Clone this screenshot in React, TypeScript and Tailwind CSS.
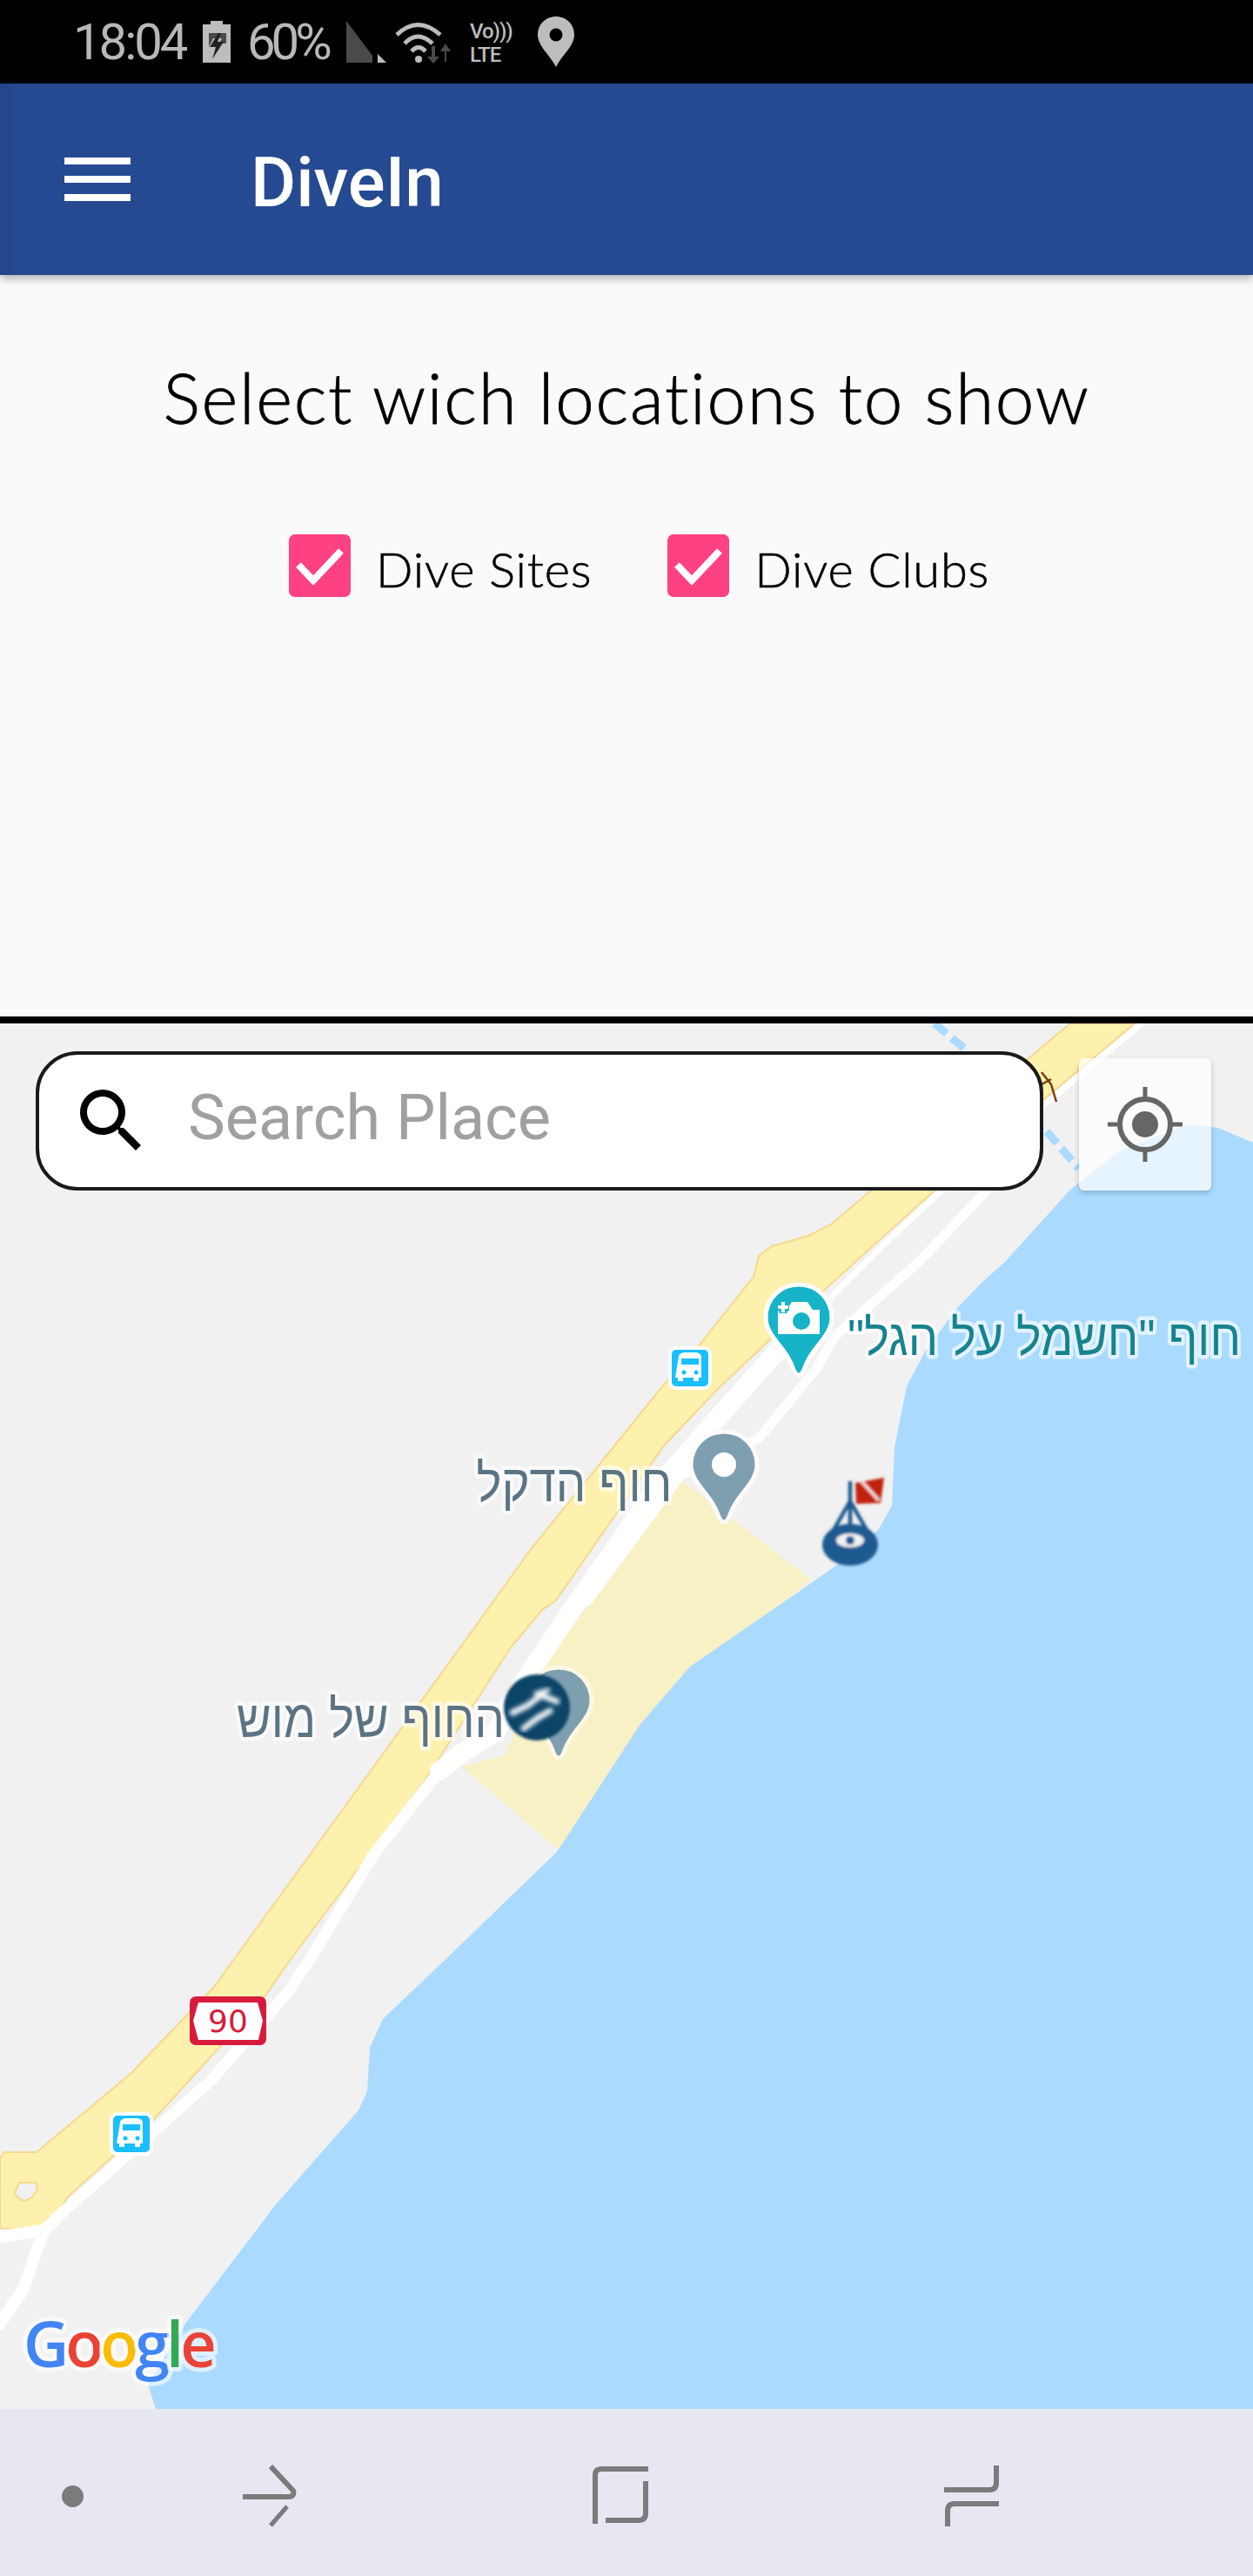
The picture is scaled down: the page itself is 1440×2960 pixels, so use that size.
import React from 'react';

const PIN = 'M0 0C-22 0-38 17-38 38C-38 60-14 72-6 98Q0 110 6 98C14 72 38 60 38 38C38 17 22 0 0 0Z';

const BusIcon: React.FC<{ x: number; y: number }> = ({ x, y }) => (
  <g transform={`translate(${x} ${y})`}>
    <rect x="2" y="2" width="46" height="46" rx="7" fill="#19bfff" stroke="#fff" strokeWidth="4" />
    <path d="M12 12q0-4 6-5h14q6 1 6 5v24h-3v4h-6v-4h-12v4h-6v-4h-3z" fill="#fff" />
    <rect x="15" y="14" width="20" height="7" fill="#19bfff" />
    <circle cx="18" cy="30" r="2.5" fill="#19bfff" />
    <circle cx="32" cy="30" r="2.5" fill="#19bfff" />
  </g>
);

// the map picture, in page coordinates
const MapDrawing: React.FC = () => (
  <svg viewBox="0 1176 1440 1592" className="absolute inset-0 w-full h-full">
    <defs>
      <filter id="soft"><feGaussianBlur stdDeviation="1.6" /></filter>
      <filter id="softer"><feGaussianBlur stdDeviation="2.6" /></filter>
    </defs>
    <rect x="0" y="1176" width="1440" height="1592" fill="#f1f1f1" />
    <path d="M782 1700L848 1750L932 1815L902 1840L793 1915L736 1981L642 2125L530 2030L580 2017L628 1907L680 1840Z" fill="#f8f1c6" />
    <path
      d="M1368 1292L1400 1296L1440 1313V2768H179L170 2740L213 2670L317 2533L412 2425L422 2403L425 2353L440 2320L500 2263L640 2128L736 1981L793 1915L902 1840L974 1790L1010 1757L1025 1730L1028 1663L1042 1593L1063 1553L1100 1503L1129 1473L1155 1450L1230 1367L1290 1320Z"
      fill="#aadaff"
    />
    <path d="M1074 1176L1111 1207M1203 1300L1240 1343" stroke="#aadaff" strokeWidth="9" strokeDasharray="18 8" fill="none" />
    {/* yellow main road band */}
    <path
      d="M1230 1176L1001 1368L955 1407L929 1420L887 1432L872 1443L866 1467L806 1543L758 1597L608 1783L560 1850L357 2130L270 2250L247 2282L150 2383L42 2473H5L0 2480V2560L30 2563L62 2553L77 2525L177 2435L300 2300L335 2250L427 2127L490 2043L587 1893L623 1850L638 1840L710 1737L764 1660L824 1597L884 1540L1016 1420L1074 1368L1304 1176Z"
      fill="#fef1ae"
      stroke="#f5d98f"
      strokeWidth="2"
    />
    <path d="M22 2508H42L43 2515L37 2525L28 2529L22 2527L17 2520Z" fill="#f1f1f1" stroke="#f5d98f" strokeWidth="2" />
    {/* roads */}
    <g fill="none" stroke="#fff" strokeLinejoin="round" strokeLinecap="round">
      <path d="M1312 1176L1082 1368L1022 1424L900 1545" strokeWidth="7" />
      <path d="M1134 1368L1056 1450L958 1537L938 1573L872 1653L782 1695L675 1840" strokeWidth="11" />
      <path d="M900 1545L815 1640L755 1710L657 1850" strokeWidth="22" />
      <path d="M657 1850L610 1920L585 1960L570 1990L530 2015L505 2035" strokeWidth="22" />
      <path d="M505 2035L430 2130L357 2250L330 2290L243 2390L63 2550" strokeWidth="13" />
      <path d="M63 2552L50 2563L0 2570M50 2563L43 2583L27 2630L0 2670" strokeWidth="14" />
    </g>
    <path d="M1197 1232L1208 1246L1214 1266M1197 1246L1208 1240" stroke="#7a3f0c" strokeWidth="2.5" fill="none" />

    {/* pins */}
    <g transform="translate(918 1476)">
      <path d={PIN} fill="#17b3c8" stroke="#fff" strokeWidth="5" />
      <path d="M-24 29H-14L-8 20H10L16 29H24V57H-24Z" fill="#fff" />
      <circle cx="3" cy="42" r="10" fill="#17b3c8" />
      <path d="M-18 33V19M-25 26H-11" stroke="#17b3c8" strokeWidth="9" />
      <path d="M-18 32V20M-24 26H-12" stroke="#fff" strokeWidth="4" />
    </g>
    <g transform="translate(832 1645)">
      <path d={PIN} fill="#7e9fb0" stroke="#fbfbfb" strokeWidth="5" />
      <circle cx="0" cy="38" r="14" fill="#fff" />
    </g>
    <g transform="translate(642 1916)">
      <path d={PIN} fill="#7e9fb0" stroke="#fbf8e4" strokeWidth="5" />
    </g>

    <g fontFamily="'Liberation Sans','DejaVu Sans',sans-serif" fontSize="60" paintOrder="stroke" strokeWidth="9" strokeLinejoin="round">
      <text x="1200" y="1557" fontSize="58" textAnchor="middle" direction="rtl" textLength="452" lengthAdjust="spacingAndGlyphs" fill="#17838f" stroke="#ffffff" strokeOpacity="0.65">
        חוף "חשמל על הגל"
      </text>
      <text x="660" y="1725" textAnchor="middle" direction="rtl" textLength="225" lengthAdjust="spacingAndGlyphs" fill="#5b7483" stroke="#ffffff" strokeOpacity="0.65">
        חוף הדקל
      </text>
      <text x="426" y="1996" textAnchor="middle" direction="rtl" textLength="308" lengthAdjust="spacingAndGlyphs" fill="#5b7483" stroke="#ffffff" strokeOpacity="0.65">
        החוף של מוש
      </text>
    </g>

    {/* dive club marker */}
    <circle cx="617" cy="1962" r="38" fill="#0c4468" filter="url(#soft)" />
    <g filter="url(#softer)" fill="none" stroke="#f0f4f6" strokeLinecap="round">
      <path d="M589 1968L606 1960L622 1948L640 1955" strokeWidth="7" />
      <path d="M602 1986L618 1974L632 1966" strokeWidth="7" />
      <path d="M616 1946L630 1942" strokeWidth="5" />
    </g>

    {/* buoy marker */}
    <g filter="url(#soft)">
      <path d="M983 1704L1016 1698L1012 1727L984 1728Z" fill="#c0240f" />
      <path d="M990 1702L1010 1724" stroke="#f6d8d0" strokeWidth="4" />
      <path d="M977 1702V1775M977 1725L950 1772M977 1725L1004 1772" stroke="#1a5a90" strokeWidth="4.5" />
      <ellipse cx="977" cy="1775" rx="32" ry="24" fill="#1a5a90" />
      <ellipse cx="977" cy="1770" rx="16" ry="8" fill="#f1f1f1" />
      <circle cx="977" cy="1770" r="5" fill="#1a5a90" />
    </g>

    <BusIcon x={768} y={1547} />
    <BusIcon x={126} y={2427} />

    {/* route shield */}
    <rect x="218" y="2294" width="88" height="56" rx="7" fill="#d81b3c" />
    <path d="M228 2301L296 2301L302 2322L297 2344L228 2344L222 2322Z" fill="#fff" />
    <text x="262" y="2335" textAnchor="middle" fontSize="36" fontFamily="'DejaVu Sans',sans-serif" fill="#d81b3c">
      90
    </text>

    {/* google mark */}
    <text x="27" y="2720" fontSize="72" fontWeight="600" fontFamily="'Open Sans',sans-serif" letterSpacing="-4" paintOrder="stroke" stroke="#ffffff" strokeOpacity="0.6" strokeWidth="10" strokeLinejoin="round">
      <tspan fill="#4285f4">G</tspan>
      <tspan fill="#ea4335">o</tspan>
      <tspan fill="#fbbc05">o</tspan>
      <tspan fill="#4285f4">g</tspan>
      <tspan fill="#34a853">l</tspan>
      <tspan fill="#ea4335">e</tspan>
    </text>
  </svg>
);

const CheckOption: React.FC<{ label: string }> = ({ label }) => (
  <div className="flex items-center gap-[29px]">
    <div className="w-[71px] h-[72px] rounded-[7px] bg-[#fd4181] flex items-center justify-center">
      <svg width="71" height="72" viewBox="0 0 71 72">
        <path d="M11 35L28 53L60 19" fill="none" stroke="#fff" strokeWidth="8" />
      </svg>
    </div>
    <span className="mt-2 text-[56px] leading-none font-light text-black tracking-[0.8px] [-webkit-text-stroke:0.6px_black]">{label}</span>
  </div>
);

const StatusBar: React.FC = () => (
  <div className="h-[96px] bg-black flex items-center pl-[84px] text-[#b8b8b8] font-['Roboto',sans-serif]">
    <span className="text-[58px] leading-none tracking-[-3px] w-[149px]">18:04</span>
    <svg width="32" height="48" viewBox="0 0 32 48" className="mr-[19px]">
      <path d="M9 0h14v4h9v44H0V4h9z" fill="#bdbdbd" />
      <path d="M7 14h20v12l-8 0 3-6-10 0-5 10z" fill="#4a4a4a" />
      <path d="M18 14L8 30h7l-4 14 13-20h-7l4-10z" fill="#222" />
    </svg>
    <span className="text-[58px] leading-none tracking-[-5px] w-[114px]">60%</span>
    <svg width="46" height="48" viewBox="0 0 46 48" className="mr-[10px]">
      <path d="M0 0L30 40V48H0Z" fill="#4a4a4a" />
      <path d="M36 38L46 48H36Z" fill="#bdbdbd" />
    </svg>
    <svg width="66" height="50" viewBox="0 0 66 50" className="mr-[20px]">
      <path d="M2 17Q26-6 52 17M11 27Q26 11 43 27M19 36Q27 27 35 36" fill="none" stroke="#bdbdbd" strokeWidth="5" />
      <circle cx="27" cy="45" r="4" fill="#bdbdbd" />
      <path d="M42 30v12h-5l7 8 7-8h-5V30zM59 48V36h5l-6-9-6 9h5v12z" fill="#4a4a4a" />
    </svg>
    <div className="w-[50px] mr-[28px] leading-none text-[24px] font-medium text-[#bdbdbd] flex flex-col gap-[3px] mt-[2px]">
      <span className="tracking-[-1px]">Vo)))</span>
      <span className="tracking-[-1px]">LTE</span>
    </div>
    <svg width="42" height="58" viewBox="0 0 42 58">
      <path d="M21 0C9 0 0 9 0 21C0 34 14 44 21 58C28 44 42 34 42 21C42 9 33 0 21 0Z" fill="#bdbdbd" />
      <circle cx="21" cy="21" r="7.5" fill="#000" />
    </svg>
  </div>
);

const NavBar: React.FC = () => (
  <div className="h-[192px] bg-[#e6e7f0] flex items-center pl-[71px] pt-[8px]">
    <div className="w-[25px] h-[25px] rounded-full bg-[#7b7b7b]" />
    <svg width="64" height="72" viewBox="0 0 64 72" fill="none" stroke="#7b7b7b" strokeWidth="6" className="ml-[183px]">
      <path d="M0 37H52Q60 37 58 30L32 2" />
      <path d="M51 48L32 70" strokeWidth="5" />
    </svg>
    <svg width="66" height="70" viewBox="0 0 66 70" fill="none" stroke="#7b7b7b" strokeWidth="6" className="ml-[337px]">
      <path d="M65 4H11Q4 4 4 11V67" />
      <path d="M16 63H54Q62 63 62 55V18" />
    </svg>
    <svg width="66" height="72" viewBox="0 0 66 72" fill="none" stroke="#7b7b7b" strokeWidth="6" className="ml-[338px]">
      <path d="M61 1V21Q61 29 53 29H1" />
      <path d="M64 45H13Q5 45 5 53V71" />
    </svg>
  </div>
);

export default function App() {
  return (
    <div className="w-[1440px] h-[2960px] flex flex-col overflow-hidden bg-[#fafafa]">
      <StatusBar />
      <header className="relative z-10 h-[220px] bg-[#264a92] shadow-[0_4px_10px_rgba(0,0,0,0.3)] flex items-center pl-[74px]">
        <div className="absolute left-0 top-0 bottom-0 w-4 bg-[#23468c]" />
        <div className="w-[76px] flex flex-col gap-[13px]">
          <div className="h-2 bg-white" />
          <div className="h-2 bg-white" />
          <div className="h-2 bg-white" />
        </div>
        <h1 className="ml-[138px] pt-[8px] text-[80px] leading-none font-medium text-white font-['Roboto',sans-serif]">
          DiveIn
        </h1>
      </header>

      <section className="h-[852px] bg-[#fafafa] flex flex-col items-center pt-[92px] font-['Lato',sans-serif]">
        <h2 className="text-[80px] leading-[96px] font-light text-black tracking-[1.7px] [-webkit-text-stroke:0.8px_black]">Select wich locations to show</h2>
        <div className="w-full flex items-center gap-[87px] pl-[332px] mt-[110px]">
          <CheckOption label="Dive Sites" />
          <CheckOption label="Dive Clubs" />
        </div>
      </section>

      <div className="h-2 bg-black" />

      <div className="relative h-[1592px]">
        <MapDrawing />
        <div className="absolute left-[41px] top-[32px] w-[1158px] h-[160px] rounded-[48px] border-4 border-[#1a1a1a] bg-white flex items-center pl-[35px] font-['Roboto',sans-serif]">
          <svg width="96" height="96" viewBox="0 0 24 24" fill="#000">
            <path d="M15.5 14h-.79l-.28-.27C15.41 12.59 16 11.11 16 9.5 16 5.91 13.09 3 9.5 3S3 5.91 3 9.5 5.91 16 9.5 16c1.61 0 3.09-.59 4.23-1.57l.27.28v.79l5 4.99L20.49 19l-4.99-5zm-6 0C7.01 14 5 11.99 5 9.5S7.01 5 9.5 5 14 7.01 14 9.5 11.99 14 9.5 14z" />
          </svg>
          <span className="ml-[40px] mb-[6px] text-[72px] leading-none text-[#a0a0a0]">Search Place</span>
        </div>
        <div className="absolute left-[1240px] top-[40px] w-[152px] h-[152px] rounded-[6px] bg-white/70 shadow-[0_3px_6px_rgba(0,0,0,0.2)] flex items-center justify-center">
          <svg width="90" height="90" viewBox="0 0 90 90" stroke="#666" fill="none">
            <circle cx="45" cy="45" r="29" strokeWidth="6" />
            <circle cx="45" cy="45" r="15" fill="#666" stroke="none" />
            <path d="M45 2V16M45 74V88M2 45H16M74 45H88" strokeWidth="5" />
          </svg>
        </div>
      </div>

      <NavBar />
    </div>
  );
}
